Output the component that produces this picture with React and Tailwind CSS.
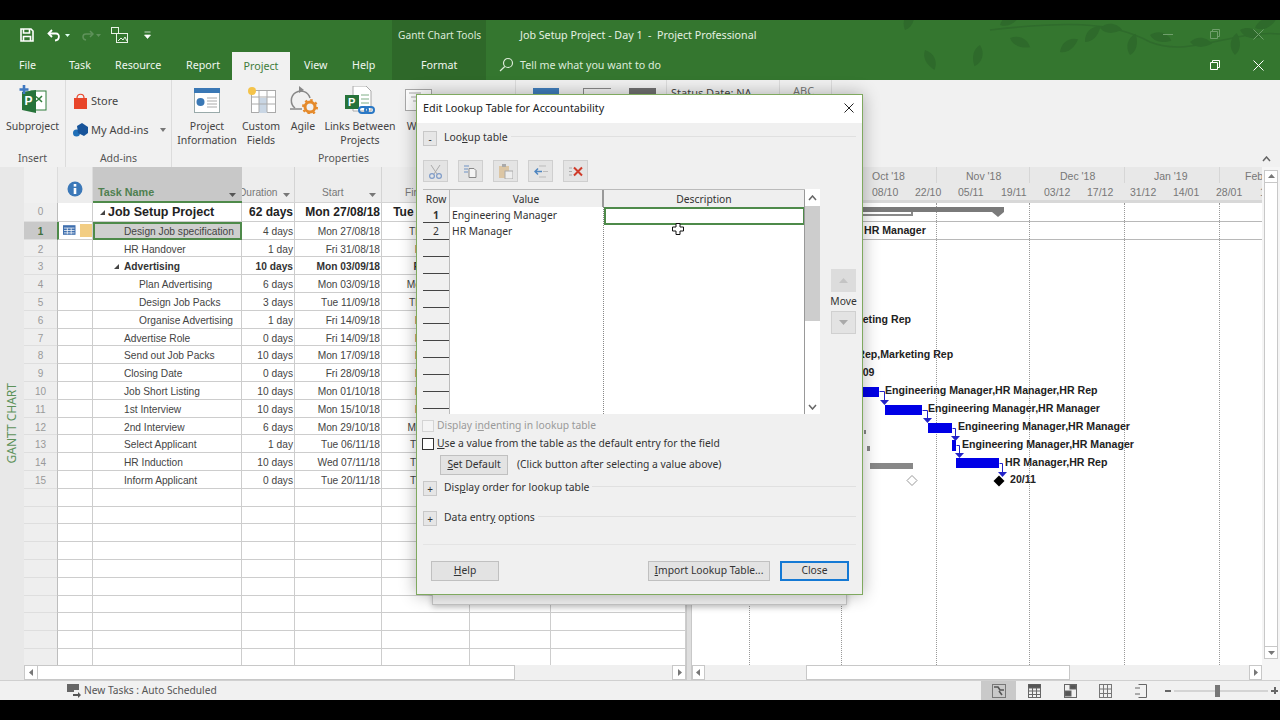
import React from "react";

const rows = [
  { n: 0, name: "Job Setup Project", pad: "pl-[15px]", dur: "62 days", start: "Mon 27/08/18", fin: "Tue 20/11/18", top: true, arrow: "left-[6px]" },
  { n: 1, name: "Design Job specification", pad: "pl-[29px]", dur: "4 days", start: "Mon 27/08/18", fin: "Thu 30/08/18", sel: true },
  { n: 2, name: "HR Handover", pad: "pl-[31px]", dur: "1 day", start: "Fri 31/08/18", fin: "Fri 31/08/18" },
  { n: 3, name: "Advertising", pad: "pl-[31px]", dur: "10 days", start: "Mon 03/09/18", fin: "Fri 14/09/18", bold: true, arrow: "left-[20px]" },
  { n: 4, name: "Plan Advertising", pad: "pl-[46px]", dur: "6 days", start: "Mon 03/09/18", fin: "Mon 10/09/18" },
  { n: 5, name: "Design Job Packs", pad: "pl-[46px]", dur: "3 days", start: "Tue 11/09/18", fin: "Thu 13/09/18" },
  { n: 6, name: "Organise Advertising", pad: "pl-[46px]", dur: "1 day", start: "Fri 14/09/18", fin: "Fri 14/09/18" },
  { n: 7, name: "Advertise Role", pad: "pl-[31px]", dur: "0 days", start: "Fri 14/09/18", fin: "Fri 14/09/18" },
  { n: 8, name: "Send out Job Packs", pad: "pl-[31px]", dur: "10 days", start: "Mon 17/09/18", fin: "Fri 28/09/18" },
  { n: 9, name: "Closing Date", pad: "pl-[31px]", dur: "0 days", start: "Fri 28/09/18", fin: "Fri 28/09/18" },
  { n: 10, name: "Job Short Listing", pad: "pl-[31px]", dur: "10 days", start: "Mon 01/10/18", fin: "Fri 12/10/18" },
  { n: 11, name: "1st Interview", pad: "pl-[31px]", dur: "10 days", start: "Mon 15/10/18", fin: "Fri 26/10/18" },
  { n: 12, name: "2nd Interview", pad: "pl-[31px]", dur: "6 days", start: "Mon 29/10/18", fin: "Mon 05/11/18" },
  { n: 13, name: "Select Applicant", pad: "pl-[31px]", dur: "1 day", start: "Tue 06/11/18", fin: "Tue 06/11/18" },
  { n: 14, name: "HR Induction", pad: "pl-[31px]", dur: "10 days", start: "Wed 07/11/18", fin: "Tue 20/11/18" },
  { n: 15, name: "Inform Applicant", pad: "pl-[31px]", dur: "0 days", start: "Tue 20/11/18", fin: "Tue 20/11/18" },
];
const blanks = Array.from({ length: 10 }, (_, i) => i);
const dlgRows = Array.from({ length: 12 }, (_, i) => i);

function GroupLabel({ children }) {
  return <div className="h-[16px] text-center text-[10.5px] leading-[16px] text-[#555]">{children}</div>;
}

function Big({ className, icon, children }) {
  return (
    <div className={`flex shrink-0 flex-col items-center whitespace-nowrap pt-[6px] text-center text-[10.5px] leading-[14px] text-[#444] ${className}`}>
      <div className="flex h-[33px] w-full items-start justify-center">{icon}</div>
      {children}
    </div>
  );
}

function MiniBtn({ children }) {
  return (
    <div className="flex h-[15px] w-[14px] shrink-0 items-center justify-center border border-[#c8c8c8] bg-[#e6e6e6] text-[10px] leading-none text-[#333]">
      {children}
    </div>
  );
}

function SectionHead({ sign, children, className }) {
  return (
    <div className={`flex items-start ${className}`}>
      <MiniBtn>{sign}</MiniBtn>
      <span className="ml-[7px] whitespace-nowrap text-[10.4px] leading-[12px] text-[#333]">{children}</span>
      <div className="ml-[3px] mt-[5px] h-px flex-1 bg-[#e0e0e0]" />
    </div>
  );
}

function ToolBtn({ className, children }) {
  return (
    <div className={`flex h-[22px] w-[25px] shrink-0 items-center justify-center border border-[#cfcfcf] bg-[#e4e4e4] ${className}`}>
      {children}
    </div>
  );
}

function DlgBtn({ className, children }) {
  return (
    <div className={`flex h-[20px] shrink-0 items-center justify-center border border-[#c0c0c0] bg-[#e3e3e3] text-[10.3px] text-[#333] ${className}`}>
      {children}
    </div>
  );
}

function Arrow({ dir }) {
  const p = { l: "M6 1 L2 4.5 L6 8 Z", r: "M3 1 L7 4.5 L3 8 Z", u: "M1 6 L4.5 2 L8 6 Z", d: "M1 3 L4.5 7 L8 3 Z" }[dir];
  return (
    <svg width="9" height="9" viewBox="0 0 9 9"><path d={p} fill="#777" /></svg>
  );
}

function Leaves() {
  const leaf = "M0 0 C6 -8 16 -8 22 -2 C14 4 6 5 0 0 Z";
  const items = [
    [905, 30, -60], [925, 50, 70], [980, 45, 110], [1000, 25, -20], [1010, 38, 30], [1060, 52, -30],
    [1085, 42, -40], [1100, 28, 10], [1130, 55, -70], [1150, 35, 20], [1190, 42, 10], [1235, 55, -80], [1255, 28, -15], [1240, 30, 25],
  ];
  return (
    <svg className="absolute left-0 top-0" width="1280" height="60" viewBox="0 20 1280 60">
      <path d="M990 30 C1060 22 1110 20 1150 42 C1190 58 1230 30 1280 34" stroke="#2f6b2c" strokeWidth="1.5" fill="none" />
      {items.map(([x, y, r], i) => (
        <path key={i} d={leaf} transform={`translate(${x} ${y}) rotate(${r})`} fill="#2e6a2b" />
      ))}
    </svg>
  );
}

function Row({ r }) {
  const size = r.top ? "text-[12.5px] font-bold text-[#222]" : r.bold ? "text-[10.2px] font-bold text-[#333]" : "text-[10.2px] text-[#444]";
  const sizeDate = r.top ? "text-[12px] font-bold text-[#222]" : r.bold ? "text-[10.2px] font-bold text-[#333]" : "text-[10.2px] text-[#444]";
  const line = "border-r border-b border-[#cdcdcd]";
  return (
    <div className={`flex shrink-0 items-stretch ${r.top ? "h-[18.800px] leading-[18px]" : "h-[17.800px] leading-[20px]"}`}>
      <div className={`w-[33px] border-b border-[#dedede] text-center text-[10px] ${r.sel ? "bg-[#c9c9c9] font-bold text-[#3f6f3d]" : "bg-[#eeeeee] text-[#999]"}`}>{r.n}</div>
      <div className={`flex w-[36px] items-center gap-[4px] border-b border-r border-[#cdcdcd] bg-white pl-[4px] ${r.sel ? "border-l-2 border-l-[#4e8a4a]" : "border-l border-l-[#bdbdbd]"}`}>
        {r.sel && (
          <>
            <svg width="13" height="10" viewBox="0 0 13 10"><rect width="13" height="10" fill="#3f6fae" /><path d="M1 3h11M1 5.500h11M1 8h11M4.500 3v6.500M8.500 3v6.500" stroke="#fff" strokeWidth="0.800" /></svg>
            <div className="h-[13px] w-[13px] bg-[#f2cd83]" />
          </>
        )}
      </div>
      <div className={`relative w-[149px] whitespace-nowrap ${r.pad} ${size} ${r.sel ? "border-2 border-[#4e8a4a] bg-[#cfcfcf] leading-[15px]" : `${line} bg-white`}`}>
        {r.arrow && (
          <svg className={`absolute top-[6px] ${r.arrow}`} width="7" height="7" viewBox="0 0 7 7"><path d="M6 1 V6 H1 Z" fill="#444" /></svg>
        )}
        {r.name}
      </div>
      <div className={`w-[53px] whitespace-nowrap bg-white pr-[1px] text-right ${line} ${sizeDate}`}>{r.dur}</div>
      <div className={`w-[87px] whitespace-nowrap bg-white pr-[1px] text-right ${line} ${sizeDate}`}>{r.start}</div>
      <div className={`w-[88px] whitespace-nowrap bg-white text-right ${r.top ? "pr-[6px]" : "pr-0"} ${line} ${sizeDate}`}>{r.fin}</div>
      <div className={`w-[81px] bg-white ${line}`} />
      <div className={`w-[135px] bg-white ${line}`} />
    </div>
  );
}

function BlankRow() {
  const line = "border-r border-b border-[#cdcdcd] bg-white";
  return (
    <div className="flex h-[17.800px] shrink-0">
      <div className="w-[33px] border-b border-[#dedede] bg-[#eeeeee]" />
      <div className={`w-[36px] border-l border-l-[#bdbdbd] ${line}`} />
      <div className={`w-[149px] ${line}`} />
      <div className={`w-[53px] ${line}`} />
      <div className={`w-[87px] ${line}`} />
      <div className={`w-[88px] ${line}`} />
      <div className={`w-[81px] ${line}`} />
      <div className={`w-[135px] ${line}`} />
    </div>
  );
}

export default function App() {
  return (
    <div className="relative flex h-[720px] w-[1280px] flex-col overflow-hidden bg-black font-['Noto_Sans',sans-serif]">
      <div className="h-[20px] shrink-0" />

      {/* Title + tabs */}
      <div className="relative h-[60px] shrink-0 bg-[#34762f] text-white">
        <Leaves />
        <div className="absolute bottom-0 left-[392px] top-0 w-[94px] bg-[#2e6829]" />
        <div className="relative flex h-[30px] items-center">
          <svg className="ml-[20px]" width="14" height="14" viewBox="0 0 14 14" fill="none" stroke="#fff" strokeWidth="1.600"><path d="M1 1h10l2 2v10H1z" /><path d="M3.500 1v4h6V1M3.500 13V8.500h7V13" /></svg>
          <svg className="ml-[13px]" width="15" height="13" viewBox="0 0 15 13" fill="none" stroke="#fff" strokeWidth="1.800"><path d="M5 1 L1.500 4.500 L5 8" /><path d="M2 4.500 H9 C13 4.500 13 11 8 11.500" /></svg>
          <svg className="ml-[2px]" width="7" height="5" viewBox="0 0 7 5"><path d="M1 1h5L3.500 4z" fill="#dfe" /></svg>
          <svg className="ml-[9px]" width="14" height="11" viewBox="0 0 14 11" fill="none" stroke="#5f925b" strokeWidth="1.500"><path d="M10 1 L13 4 L10 7" /><path d="M13 4 H6 C2 4 2 9 6 10" /></svg>
          <svg className="ml-[1px]" width="7" height="5" viewBox="0 0 7 5"><path d="M1 1h5L3.500 4z" fill="#5f925b" /></svg>
          <svg className="ml-[9px]" width="17" height="16" viewBox="0 0 17 16" fill="none" stroke="#e8f2e6" strokeWidth="1"><rect x="0.500" y="0.500" width="7" height="6" /><rect x="5.500" y="6.500" width="11" height="9" fill="#34762f" /><path d="M7 14l3-3 2 2 2-3 2 4" /></svg>
          <svg className="ml-[16px]" width="7" height="8" viewBox="0 0 7 8"><path d="M0.500 1h6M0.500 4h6L3.500 7.500z" stroke="#fff" fill="#fff" strokeWidth="0.700" /></svg>
          <span className="absolute left-[398px] top-[7px] whitespace-nowrap text-[10.200px] leading-[16px] text-[#dcebd9]">Gantt Chart Tools</span>
          <span className="absolute left-[520px] top-[7px] whitespace-pre text-[10.700px] leading-[16px] text-[#e4f0e2]">Job Setup Project - Day 1  -  Project Professional</span>
          <span className="absolute left-[1163px] top-[14px] h-px w-[10px] bg-[#6f9f6b]" />
          <svg className="absolute left-[1210px] top-[9px]" width="10" height="10" viewBox="0 0 10 10" fill="none" stroke="#6f9f6b"><path d="M2.500 2.500V.5h7v7h-2M.5 2.500h7v7h-7z" /></svg>
          <svg className="absolute left-[1253px] top-[9px]" width="11" height="11" viewBox="0 0 11 11" stroke="#6f9f6b"><path d="M.5.500l10 10M10.500.500l-10 10" /></svg>
        </div>
        <div className="relative flex h-[30px] items-end text-[10.700px] text-[#f0f6ef]">
          <span className="ml-[19px] w-[50px] pb-[7px] leading-[16px]">File</span>
          <span className="w-[46px] pb-[7px] leading-[16px]">Task</span>
          <span className="w-[71px] pb-[7px] leading-[16px]">Resource</span>
          <span className="w-[46px] pb-[7px] leading-[16px]">Report</span>
          <span className="flex h-[28px] w-[58px] items-center justify-center bg-[#f1f1f1] text-[#3f7c3b]">Project</span>
          <span className="ml-[14px] w-[48px] pb-[7px] leading-[16px]">View</span>
          <span className="w-[47px] pb-[7px] leading-[16px]">Help</span>
          <span className="absolute bottom-[7px] left-[421px] leading-[16px]">Format</span>
          <svg className="absolute bottom-[8px] left-[499px]" width="15" height="15" viewBox="0 0 15 15" fill="none" stroke="#dcebd9" strokeWidth="1.200"><circle cx="9" cy="6" r="4.500" /><path d="M5.800 9.500L1 14" /></svg>
          <span className="absolute bottom-[7px] left-[520px] whitespace-nowrap leading-[16px] text-[#dcebd9]">Tell me what you want to do</span>
          <svg className="absolute bottom-[10px] left-[1210px]" width="10" height="10" viewBox="0 0 10 10" fill="none" stroke="#fff"><path d="M2.500 2.500V.5h7v7h-2M.5 2.500h7v7h-7z" /></svg>
          <svg className="absolute bottom-[9px] left-[1253px]" width="11" height="11" viewBox="0 0 11 11" stroke="#fff"><path d="M.5.500l10 10M10.500.500l-10 10" /></svg>
        </div>
      </div>

      {/* Ribbon */}
      <div className="relative flex h-[87px] shrink-0 bg-[#f1f1f1]">
        <div className="flex w-[66px] shrink-0 flex-col justify-between border-r border-[#dcdcdc] pb-[1px]">
          <Big
            className="w-full"
            icon={
              <svg className="-mt-[1px]" width="28" height="28" viewBox="0 0 28 28">
                <rect x="12" y="6" width="15" height="19" fill="#fff" stroke="#2f7d3a" />
                <path d="M16 11l4 3-4 3M23 11l-3 3 3 3" fill="none" stroke="#2f7d3a" strokeWidth="1.500" />
                <path d="M3 7l14-2v23L3 25z" fill="#27733a" />
                <text x="5.500" y="20" fontSize="12" fontWeight="700" fill="#fff" fontFamily="Liberation Sans">P</text>
                <path d="M5 0v9M0.500 4.500h9" stroke="#3f78c0" strokeWidth="2.600" />
              </svg>
            }
          >
            Subproject
          </Big>
          <GroupLabel>Insert</GroupLabel>
        </div>
        <div className="flex w-[106px] shrink-0 flex-col justify-between border-r border-[#dcdcdc] pb-[1px]">
          <div className="pl-[7px] text-[11px] text-[#444]">
            <div className="mt-[12px] flex h-[18px] items-center gap-[3px]">
              <svg width="15" height="16" viewBox="0 0 15 16"><path d="M1 5h13v11H1z" fill="#e8452a" /><path d="M4 5c0-5 7-5 7 0" fill="none" stroke="#e8452a" strokeWidth="1.200" /></svg>
              Store
            </div>
            <div className="mt-[11px] flex h-[18px] items-center gap-[3px]">
              <svg width="15" height="14" viewBox="0 0 15 14"><circle cx="3.500" cy="10" r="3.500" fill="#1f6fb8" /><path d="M4 3l5-3 6 4v6l-4 3-6-3z" fill="#17549a" /></svg>
              My Add-ins
              <svg className="ml-[9px]" width="6" height="4" viewBox="0 0 6 4"><path d="M0 0h6L3 4z" fill="#777" /></svg>
            </div>
          </div>
          <GroupLabel>Add-ins</GroupLabel>
        </div>
        <div className="flex w-[344px] shrink-0 flex-col justify-between border-r border-[#dcdcdc] pb-[1px]">
          <div className="flex pl-[5px]">
            <Big
              className="w-[60px]"
              icon={
                <svg className="mt-[2px]" width="26" height="25" viewBox="0 0 26 25">
                  <rect x="0.500" y="0.500" width="25" height="24" fill="#fff" stroke="#9aa" />
                  <rect width="26" height="5" fill="#3a78b5" />
                  <circle cx="6.500" cy="14" r="4" fill="#3a78b5" />
                  <path d="M13 10h10M13 13h10M13 16h10M13 19h10" stroke="#aaa" />
                </svg>
              }
            >
              Project
              <br />
              Information
            </Big>
            <Big
              className="ml-[2px] w-[44px]"
              icon={
                <svg width="29" height="28" viewBox="0 0 29 28">
                  <rect x="4.500" y="4.500" width="24" height="22" fill="#fff" stroke="#aaa" />
                  <rect x="12" y="12" width="8" height="15" fill="#c9d6e4" />
                  <path d="M4 11h24M4 18h24M12 4v22M20 4v22" stroke="#aaa" />
                  <circle cx="5" cy="5" r="4" fill="#f4c34a" />
                </svg>
              }
            >
              Custom
              <br />
              Fields
            </Big>
            <Big
              className="ml-[2px] w-[36px]"
              icon={
                <svg width="29" height="28" viewBox="0 0 29 28">
                  <path d="M6 22 A9.500 9.500 0 1 1 21 12" fill="none" stroke="#888" strokeWidth="1.500" />
                  <path d="M10 0l5 4-5 3z" fill="#888" />
                  <path d="M1 23h12" stroke="#888" strokeWidth="1.500" />
                  <circle cx="21" cy="21" r="5" fill="none" stroke="#e58a2b" strokeWidth="3" />
                  <circle cx="21" cy="21" r="7" fill="none" stroke="#e58a2b" strokeWidth="2" strokeDasharray="2.500 3" />
                </svg>
              }
            >
              Agile
            </Big>
            <Big
              className="ml-[2px] w-[74px]"
              icon={
                <svg width="30" height="30" viewBox="0 0 30 30">
                  <path d="M8 0h13l5 5v20H8z" fill="#fff" stroke="#aaa" />
                  <rect x="0" y="9" width="14" height="14" fill="#27733a" />
                  <text x="3" y="20" fontSize="11" fontWeight="700" fill="#fff" fontFamily="Liberation Sans">P</text>
                  <path d="M16 9h8M16 13h8M16 17h8" stroke="#7fae86" />
                  <rect x="14" y="21" width="9" height="6" rx="3" fill="none" stroke="#2a78c5" strokeWidth="2" />
                  <rect x="20" y="21" width="9" height="6" rx="3" fill="none" stroke="#2a78c5" strokeWidth="2" />
                </svg>
              }
            >
              Links Between
              <br />
              Projects
            </Big>
            <Big
              className="w-[42px]"
              icon={
                <svg className="mt-[3px]" width="27" height="22" viewBox="0 0 27 22"><rect x="0.500" y="0.500" width="26" height="21" fill="#fff" stroke="#aaa" /><path d="M4 4h12M6 8h12M8 12h12" stroke="#aaa" /></svg>
              }
            >
              WBS
            </Big>
          </div>
          <GroupLabel>Properties</GroupLabel>
        </div>
        <div className="flex w-[151px] shrink-0 items-start border-r border-[#dcdcdc] pl-[17px] pt-[8px]">
          <div className="h-[24px] w-[26px] border-t-[6px] border-[#3f7dbb]" />
          <div className="ml-[24px] h-[24px] w-[28px] border-l border-t border-[#888]" />
          <div className="ml-[18px] h-[24px] w-[27px] border-t-[6px] border-[#707070]" />
        </div>
        <div className="w-[113px] shrink-0 whitespace-nowrap border-r border-[#dcdcdc] pl-[4px] pt-[5px] text-[11px] leading-[16px] text-[#444]">Status Date: NA</div>
        <div className="w-[52px] shrink-0 border-r border-[#dcdcdc] pl-[13px] pt-[3px] text-[11px] leading-[16px] text-[#777]">ABC</div>
        <svg className="absolute bottom-[5px] right-[9px]" width="9" height="6" viewBox="0 0 9 6" fill="none" stroke="#666" strokeWidth="1.500"><path d="M1 5l3.500-4 3.500 4" /></svg>
      </div>

      {/* Main */}
      <div className="flex h-[514px] shrink-0 border-b border-[#d0d0d0] bg-[#f0f0f0]">
        <div className="flex w-[24px] shrink-0 flex-col items-center justify-end bg-[#e8e8e8] pb-[216px]">
          <span className="rotate-180 whitespace-nowrap text-[12px] leading-[14px] text-[#5d925a] [writing-mode:vertical-rl]">GANTT CHART</span>
        </div>

        {/* Table */}
        <div className="flex w-[662px] shrink-0 flex-col font-['Liberation_Sans',sans-serif]">
          <div className="flex h-[36px] shrink-0 text-[10.200px] text-[#777]">
            <div className="w-[33px] bg-[#f0f0f0]" />
            <div className="flex w-[36px] items-start justify-center border-l border-r border-[#dcdcdc] bg-[#ededed] pt-[14px]">
              <svg width="16" height="16" viewBox="0 0 16 16"><circle cx="8" cy="8" r="7.500" fill="#3b78b8" /><rect x="6.700" y="3" width="2.600" height="2.600" fill="#fff" /><rect x="6.700" y="7" width="2.600" height="6" fill="#fff" /></svg>
            </div>
            <div className="flex w-[149px] items-end justify-between border-b-2 border-[#4e8a4a] bg-[#c8c8c8] pb-[1px] pl-[5px] pr-[6px] text-[10.800px] font-bold text-[#4f8050]">
              Task Name
              <svg className="mb-[3px]" width="7" height="4" viewBox="0 0 7 4"><path d="M0 0h7L3.500 4z" fill="#555" /></svg>
            </div>
            <div className="flex w-[53px] items-end justify-between overflow-hidden border-b border-r border-[#d4d4d4] bg-[#ededed] pb-[2px] pr-[4px]">
              <span className="-ml-[3px]">Duration</span>
              <svg className="mb-[3px]" width="7" height="4" viewBox="0 0 7 4"><path d="M0 0h7L3.500 4z" fill="#777" /></svg>
            </div>
            <div className="flex w-[87px] items-end justify-between border-b border-r border-[#d4d4d4] bg-[#ededed] pb-[2px] pl-[27px] pr-[5px]">
              Start
              <svg className="mb-[3px]" width="7" height="4" viewBox="0 0 7 4"><path d="M0 0h7L3.500 4z" fill="#777" /></svg>
            </div>
            <div className="flex w-[88px] items-end border-b border-r border-[#d4d4d4] bg-[#ededed] pb-[2px] pl-[23px]">Finish</div>
            <div className="w-[81px] border-b border-r border-[#d4d4d4] bg-[#ededed]" />
            <div className="w-[135px] border-b border-r border-[#d4d4d4] bg-[#ededed]" />
          </div>
          <div className="flex-1 overflow-hidden">
            {rows.map((r) => (
              <Row key={r.n} r={r} />
            ))}
            {blanks.map((b) => (
              <BlankRow key={b} />
            ))}
          </div>
          <div className="flex h-[15px] shrink-0 items-stretch bg-[#f0f0f0]">
            <div className="flex w-[14px] items-center justify-center border border-[#c8c8c8] bg-white"><Arrow dir="l" /></div>
            <div className="w-[477px] border-y border-r border-[#c8c8c8] bg-white" />
            <div className="flex-1" />
            <div className="flex w-[14px] items-center justify-center border border-[#c8c8c8] bg-white"><Arrow dir="r" /></div>
          </div>
        </div>

        {/* Splitter */}
        <div className="w-[6px] shrink-0 border-x border-[#c8c8c8] bg-[#dedede]" />

        {/* Chart */}
        <div className="flex w-[570px] shrink-0 flex-col font-['Liberation_Sans',sans-serif]">
          <div className="relative h-[36px] shrink-0 overflow-hidden border-b-[3px] border-[#d8d8d8] bg-[#e8e8e8] text-[10.500px] leading-[14px] text-[#777]">
            <span className="absolute left-[180px] top-[2px]">Oct '18</span>
            <span className="absolute left-[274px] top-[2px]">Nov '18</span>
            <span className="absolute left-[368px] top-[2px]">Dec '18</span>
            <span className="absolute left-[462px] top-[2px]">Jan '19</span>
            <span className="absolute left-[553px] top-[2px]">Feb</span>
            <span className="absolute left-[180px] top-[18px]">08/10</span>
            <span className="absolute left-[223px] top-[18px]">22/10</span>
            <span className="absolute left-[266px] top-[18px]">05/11</span>
            <span className="absolute left-[309px] top-[18px]">19/11</span>
            <span className="absolute left-[352px] top-[18px]">03/12</span>
            <span className="absolute left-[395px] top-[18px]">17/12</span>
            <span className="absolute left-[438px] top-[18px]">31/12</span>
            <span className="absolute left-[481px] top-[18px]">14/01</span>
            <span className="absolute left-[524px] top-[18px]">28/01</span>
            <span className="absolute left-[568px] top-[18px]">1</span>
            <span className="absolute left-[244px] top-0 h-[16px] w-px bg-[#d6d6d6]" />
            <span className="absolute left-[337px] top-0 h-[16px] w-px bg-[#d6d6d6]" />
            <span className="absolute left-[432px] top-0 h-[16px] w-px bg-[#d6d6d6]" />
            <span className="absolute left-[527px] top-0 h-[16px] w-px bg-[#d6d6d6]" />
          </div>
          <div className="relative flex-1 overflow-hidden bg-white text-[10.600px] font-bold leading-[12px] text-[#222]">
            <span className="absolute bottom-0 left-[57px] top-0 border-l border-dotted border-[#999]" />
            <span className="absolute bottom-0 left-[149px] top-0 border-l border-dotted border-[#999]" />
            <span className="absolute bottom-0 left-[244px] top-0 border-l border-dotted border-[#999]" />
            <span className="absolute bottom-0 left-[337px] top-0 border-l border-dotted border-[#999]" />
            <span className="absolute bottom-0 left-[432px] top-0 border-l border-dotted border-[#999]" />
            <span className="absolute bottom-0 left-[527px] top-0 border-l border-dotted border-[#999]" />
            <span className="absolute left-0 right-0 top-[18px] h-px bg-[#b8b8b8]" />
            <span className="absolute left-0 right-0 top-[36px] h-px bg-[#b8b8b8]" />

            <span className="absolute left-[100px] top-[4px] h-[5px] w-[212px] bg-[#7a7a7a]" />
            <span className="absolute left-[100px] top-[9px] h-[4px] w-[121px] border-b-2 border-r-2 border-[#8a8a8a] bg-white" />
            <svg className="absolute left-[300px] top-[8px]" width="12" height="7" viewBox="0 0 12 7"><path d="M0 0h12v1L6 6 0 1z" fill="#7a7a7a" /></svg>

            <span className="absolute left-[172px] top-[21px] whitespace-nowrap">HR Manager</span>
            <span className="absolute left-[146px] top-[110px] whitespace-nowrap">Marketing Rep</span>
            <span className="absolute left-[147px] top-[145px] whitespace-nowrap">HR Rep,Marketing Rep</span>
            <span className="absolute left-[156px] top-[163px] whitespace-nowrap">28/09</span>
            <span className="absolute left-[193px] top-[181px] whitespace-nowrap">Engineering Manager,HR Manager,HR Rep</span>
            <span className="absolute left-[236px] top-[199px] whitespace-nowrap">Engineering Manager,HR Manager</span>
            <span className="absolute left-[266px] top-[217px] whitespace-nowrap">Engineering Manager,HR Manager</span>
            <span className="absolute left-[270px] top-[235px] whitespace-nowrap">Engineering Manager,HR Manager</span>
            <span className="absolute left-[313px] top-[253px] whitespace-nowrap">HR Manager,HR Rep</span>
            <span className="absolute left-[318px] top-[270px] whitespace-nowrap">20/11</span>

            <span className="absolute left-[150px] top-[184px] h-[10px] w-[37px] bg-[#0000e6]" />
            <span className="absolute left-[193px] top-[202px] h-[10px] w-[37px] bg-[#0000e6]" />
            <span className="absolute left-[236px] top-[220px] h-[10px] w-[24px] bg-[#0000e6]" />
            <span className="absolute left-[260px] top-[237px] h-[11px] w-[4px] bg-[#0000e6]" />
            <span className="absolute left-[264px] top-[255px] h-[10px] w-[43px] bg-[#0000e6]" />
            <span className="absolute left-[172px] top-[227px] h-[4px] w-[2px] bg-[#888]" />
            <span className="absolute left-[175px] top-[243px] h-[5px] w-[3px] bg-[#888]" />
            <span className="absolute left-[178px] top-[260px] h-[6px] w-[43px] bg-[#888]" />

            <svg className="absolute left-0 top-0" width="570" height="300" viewBox="0 0 570 300">
              <g fill="none" stroke="#2222c8" strokeWidth="1">
                <path d="M187.500 188.500h5v10" />
                <path d="M230.500 207.500h5v10" />
                <path d="M260.500 225.500h3v10" />
                <path d="M264.500 242.500h3v10" />
                <path d="M307.500 260.500h3v11" />
              </g>
              <g fill="#2222c8">
                <path d="M188 197h9l-4.500 5z" />
                <path d="M231 215h9l-4.500 5z" />
                <path d="M259 233h9l-4.500 5z" />
                <path d="M263 250h9l-4.500 5z" />
                <path d="M306 269h9l-4.500 5z" />
              </g>
              <path d="M307 272.500l5.500 5.500-5.500 5.500-5.500-5.500z" fill="#000" />
              <path d="M220 272.500l5 5-5 5-5-5z" fill="#fff" stroke="#999" />
            </svg>
          </div>
          <div className="flex h-[15px] shrink-0 items-stretch bg-[#f0f0f0]">
            <div className="flex w-[13px] items-center justify-center border border-[#c8c8c8] bg-white"><Arrow dir="l" /></div>
            <div className="ml-[101px] w-[264px] border border-[#c8c8c8] bg-white" />
            <div className="flex-1" />
            <div className="flex w-[13px] items-center justify-center border border-[#c8c8c8] bg-white"><Arrow dir="r" /></div>
          </div>
        </div>

        {/* Vertical scrollbar */}
        <div className="flex w-[18px] shrink-0 flex-col bg-[#f5f5f5] pb-[21px] pl-[2px] pr-[2px] pt-[3px]">
          <div className="flex h-[13px] items-center justify-center border border-[#c8c8c8] bg-white"><Arrow dir="u" /></div>
          <div className="flex-1 border-x border-[#c8c8c8] bg-white" />
          <div className="flex h-[13px] items-center justify-center border border-[#c8c8c8] bg-white"><Arrow dir="d" /></div>
        </div>
      </div>

      {/* Status bar */}
      <div className="flex h-[19px] shrink-0 items-center bg-[#f1f1f1] text-[10.200px] text-[#555]">
        <svg className="ml-[67px]" width="14" height="15" viewBox="0 0 14 15"><path d="M0 1h12v6H7v2H0z" fill="#666" /><path d="M6 11h5V9l3 3-3 3v-2H6z" fill="#555" /></svg>
        <span className="ml-[3px] w-[135px] whitespace-nowrap">New Tasks : Auto Scheduled</span>
        <div className="ml-[762px] flex h-full w-[35px] items-center justify-center bg-[#c9c9c9]">
          <svg width="14" height="14" viewBox="0 0 14 14" fill="none"><rect x="0.500" y="0.500" width="13" height="13" stroke="#777" /><path d="M2 3h4l2 3h4M7 7l3 4" stroke="#555" strokeWidth="1.600" /></svg>
        </div>
        <div className="flex h-full w-[36px] items-center justify-center">
          <svg width="13" height="14" viewBox="0 0 13 14" fill="none" stroke="#666"><rect x="0.500" y="0.500" width="12" height="13" /><rect x="0" y="0" width="13" height="4" fill="#555" /><path d="M4.500 4v10M8.500 4v10M0 7h13M0 10.500h13" /></svg>
        </div>
        <div className="flex h-full w-[36px] items-center justify-center">
          <svg width="13" height="14" viewBox="0 0 13 14" fill="none" stroke="#666"><rect x="0.500" y="0.500" width="12" height="13" /><rect x="6" y="1" width="6" height="4" fill="#555" /><rect x="1" y="7" width="6" height="5" fill="#555" /></svg>
        </div>
        <div className="flex h-full w-[35px] items-center justify-center">
          <svg width="13" height="14" viewBox="0 0 13 14" fill="none" stroke="#777"><rect x="0.500" y="0.500" width="12" height="13" /><path d="M4.500 0v14M8.500 0v14M0 5h13M0 9.500h13" /></svg>
        </div>
        <div className="flex h-full w-[36px] items-center justify-center">
          <svg width="12" height="14" viewBox="0 0 12 14" fill="none" stroke="#666"><path d="M3.500.5h8v13h-8M0 4h5M0 10h5" /></svg>
        </div>
        <div className="ml-[6px] flex w-[113px] items-center">
          <span className="h-[2px] w-[6px] bg-[#666]" />
          <div className="relative mx-[3px] h-[2px] w-[94px] bg-[#d4d4d4]">
            <span className="absolute -top-[5px] left-[41px] h-[12px] w-[5px] bg-[#777]" />
          </div>
          <span className="relative h-[2px] w-[7px] bg-[#666] before:absolute before:-top-[2.500px] before:left-[2.500px] before:h-[7px] before:w-[2px] before:bg-[#666]" />
        </div>
      </div>
      <div className="flex-1" />

      {/* Window behind dialog */}
      <div className="absolute left-[432px] top-[580px] h-[25px] w-[415px] border border-[#c4c4c4] bg-[#f0f0f0] shadow-[0_2px_6px_rgba(0,0,0,0.25)]" />

      {/* Dialog */}
      <div className="absolute left-[416px] top-[94px] flex h-[501px] w-[447px] flex-col border border-[#7fa95f] bg-[#f0f0f0] shadow-[0_0_16px_rgba(0,0,0,0.3)]">
        <div className="flex h-[28px] shrink-0 items-center justify-between bg-white pb-[2px] pl-[6px] pr-[8px]">
          <span className="text-[10.800px] text-[#222]">Edit Lookup Table for Accountability</span>
          <svg width="10" height="10" viewBox="0 0 10 10" stroke="#222"><path d="M.5.500l9 9M9.500.500l-9 9" /></svg>
        </div>
        <div className="flex flex-1 flex-col px-[6px]">
          <SectionHead sign="-" className="mt-[8px]">Loo<u>k</u>up table</SectionHead>
          <div className="mt-[14px] flex gap-[10px]">
            <ToolBtn>
              <svg width="15" height="15" viewBox="0 0 15 15" fill="none"><path d="M3 1l6 9M12 1L6 10" stroke="#aaa" /><circle cx="4" cy="12" r="2.400" stroke="#7f9cc8" strokeWidth="1.200" /><circle cx="11" cy="12" r="2.400" stroke="#7f9cc8" strokeWidth="1.200" /></svg>
            </ToolBtn>
            <ToolBtn>
              <svg width="14" height="13" viewBox="0 0 14 13" fill="none"><path d="M0 1h5M0 4h4M0 7h4" stroke="#6f92c4" /><path d="M5 3.500h5l2 2v7H5z" stroke="#888" fill="#f4f4f4" /></svg>
            </ToolBtn>
            <ToolBtn>
              <svg width="14" height="15" viewBox="0 0 14 15"><rect x="0" y="2" width="10" height="12" fill="#dcc6a4" /><rect x="3" y="0" width="4" height="3" fill="#aaa" /><rect x="6" y="7" width="8" height="8" fill="#eee" stroke="#aaa" /></svg>
            </ToolBtn>
            <ToolBtn>
              <svg width="14" height="13" viewBox="0 0 14 13" fill="none"><path d="M5 1h7M9 6.500h5M5 12h7" stroke="#bbb" /><path d="M8 6.500H1M4 3.500l-3 3 3 3" stroke="#4f86c0" strokeWidth="1.500" /></svg>
            </ToolBtn>
            <ToolBtn>
              <svg width="14" height="11" viewBox="0 0 14 11" fill="none"><path d="M0 2h3M0 5.500h3M0 9h3" stroke="#aaa" /><path d="M5 1.500l8 8M13 1.500l-8 8" stroke="#cf3b2a" strokeWidth="2" /></svg>
            </ToolBtn>
          </div>

          <div className="mt-[7px] flex items-start">
            <div className="flex h-[225px] w-[397px] shrink-0 bg-white text-[10.300px] text-[#333]">
              <div className="flex w-[382px] flex-col overflow-hidden">
                <div className="flex h-[17.500px] shrink-0 items-stretch border-t border-[#bbb] bg-[#efefef] leading-[18px]">
                  <div className="w-[27px] border-r border-[#bbb] text-center">Row</div>
                  <div className="w-[154px] border-r-2 border-[#999] text-center">Value</div>
                  <div className="flex-1 border-r border-[#999] text-center">Description</div>
                </div>
                <div className="flex flex-1 overflow-hidden">
                  <div className="flex w-[27px] shrink-0 flex-col border-r border-[#bbb] bg-[#f0f0f0]">
                    {dlgRows.map((i) => (
                      <div key={i} className={`h-[16.850px] shrink-0 border-b border-[#444] text-center leading-[17px] ${i === 0 ? "font-bold" : ""}`}>
                        {i < 2 ? i + 1 : ""}
                      </div>
                    ))}
                  </div>
                  <div className="w-[154px] shrink-0 border-r border-dotted border-[#888] pl-[2px] leading-[16px]">
                    <div className="h-[16.800px]">Engineering Manager</div>
                    <div className="h-[16.800px]">HR Manager</div>
                  </div>
                  <div className="flex-1 border-r border-[#999]">
                    <div className="h-[18px] border-y-2 border-l-2 border-r border-[#4e8a4a]" />
                  </div>
                </div>
              </div>
              <div className="flex w-[15px] shrink-0 flex-col items-center bg-white">
                <div className="flex h-[17px] items-center justify-center">
                  <svg width="9" height="6" viewBox="0 0 9 6" fill="none" stroke="#666" strokeWidth="1.500"><path d="M1 5l3.500-4 3.500 4" /></svg>
                </div>
                <div className="h-[115px] w-full bg-[#cdcdcd]" />
                <div className="flex-1" />
                <div className="mb-[4px]">
                  <svg width="9" height="6" viewBox="0 0 9 6" fill="none" stroke="#666" strokeWidth="1.500"><path d="M1 1l3.500 4 3.500-4" /></svg>
                </div>
              </div>
            </div>
            <div className="ml-[11px] mt-[80px] flex w-[25px] shrink-0 flex-col items-center">
              <div className="flex h-[23px] w-[25px] items-center justify-center bg-[#dcdcdc]">
                <svg width="9" height="5" viewBox="0 0 9 5"><path d="M0 5l4.500-5 4.500 5z" fill="#c4c4c4" /></svg>
              </div>
              <div className="my-[3px] text-[10.300px] leading-[13px] text-[#333]">Move</div>
              <div className="flex h-[23px] w-[25px] items-center justify-center border border-[#d0d0d0] bg-[#e3e3e3]">
                <svg width="9" height="5" viewBox="0 0 9 5"><path d="M0 0l4.500 5 4.500-5z" fill="#aaa" /></svg>
              </div>
            </div>
          </div>

          <div className="-ml-px mt-[6px] flex h-[12px] items-center text-[10.300px] text-[#9a9a9a]">
            <div className="h-[12px] w-[12px] border border-[#d4d4d4] bg-[#f4f4f4]" />
            <span className="ml-[3px] whitespace-nowrap">Display i<u>n</u>denting in lookup table</span>
          </div>
          <div className="-ml-px mt-[6px] flex h-[12px] items-center text-[10.300px] text-[#333]">
            <div className="h-[12px] w-[12px] border border-[#333] bg-white" />
            <span className="ml-[3px] whitespace-nowrap"><u>U</u>se a value from the table as the default entry for the field</span>
          </div>
          <div className="ml-[17px] mt-[5px] flex items-center">
            <DlgBtn className="w-[68px]"><span><u>S</u>et Default</span></DlgBtn>
            <span className="ml-[9px] whitespace-nowrap text-[10.300px] text-[#333]">(Click button after selecting a value above)</span>
          </div>
          <SectionHead sign="+" className="mt-[6px]">Dis<u>p</u>lay order for lookup table</SectionHead>
          <SectionHead sign="+" className="mt-[15px]">Data entr<u>y</u> options</SectionHead>
          <div className="mt-[18px] h-px bg-[#e4e4e4]" />
          <div className="mt-[16px] flex items-center pl-[8px]">
            <DlgBtn className="w-[68px]"><span><u>H</u>elp</span></DlgBtn>
            <DlgBtn className="ml-[149px] w-[122px]"><span><u>I</u>mport Lookup Table...</span></DlgBtn>
            <div className="ml-[10px] flex h-[20px] w-[69px] items-center justify-center border-2 border-[#1479d4] bg-[#e3e3e3] text-[10.300px] text-[#333]">Close</div>
          </div>
        </div>
      </div>

      {/* Cursor */}
      <svg className="absolute left-[672px] top-[223px]" width="12" height="12" viewBox="0 0 12 12"><path d="M4 .5h4v3.500h3.500v4H8v3.500H4V8H.5V4H4z" fill="#fff" stroke="#111" /></svg>
    </div>
  );
}
